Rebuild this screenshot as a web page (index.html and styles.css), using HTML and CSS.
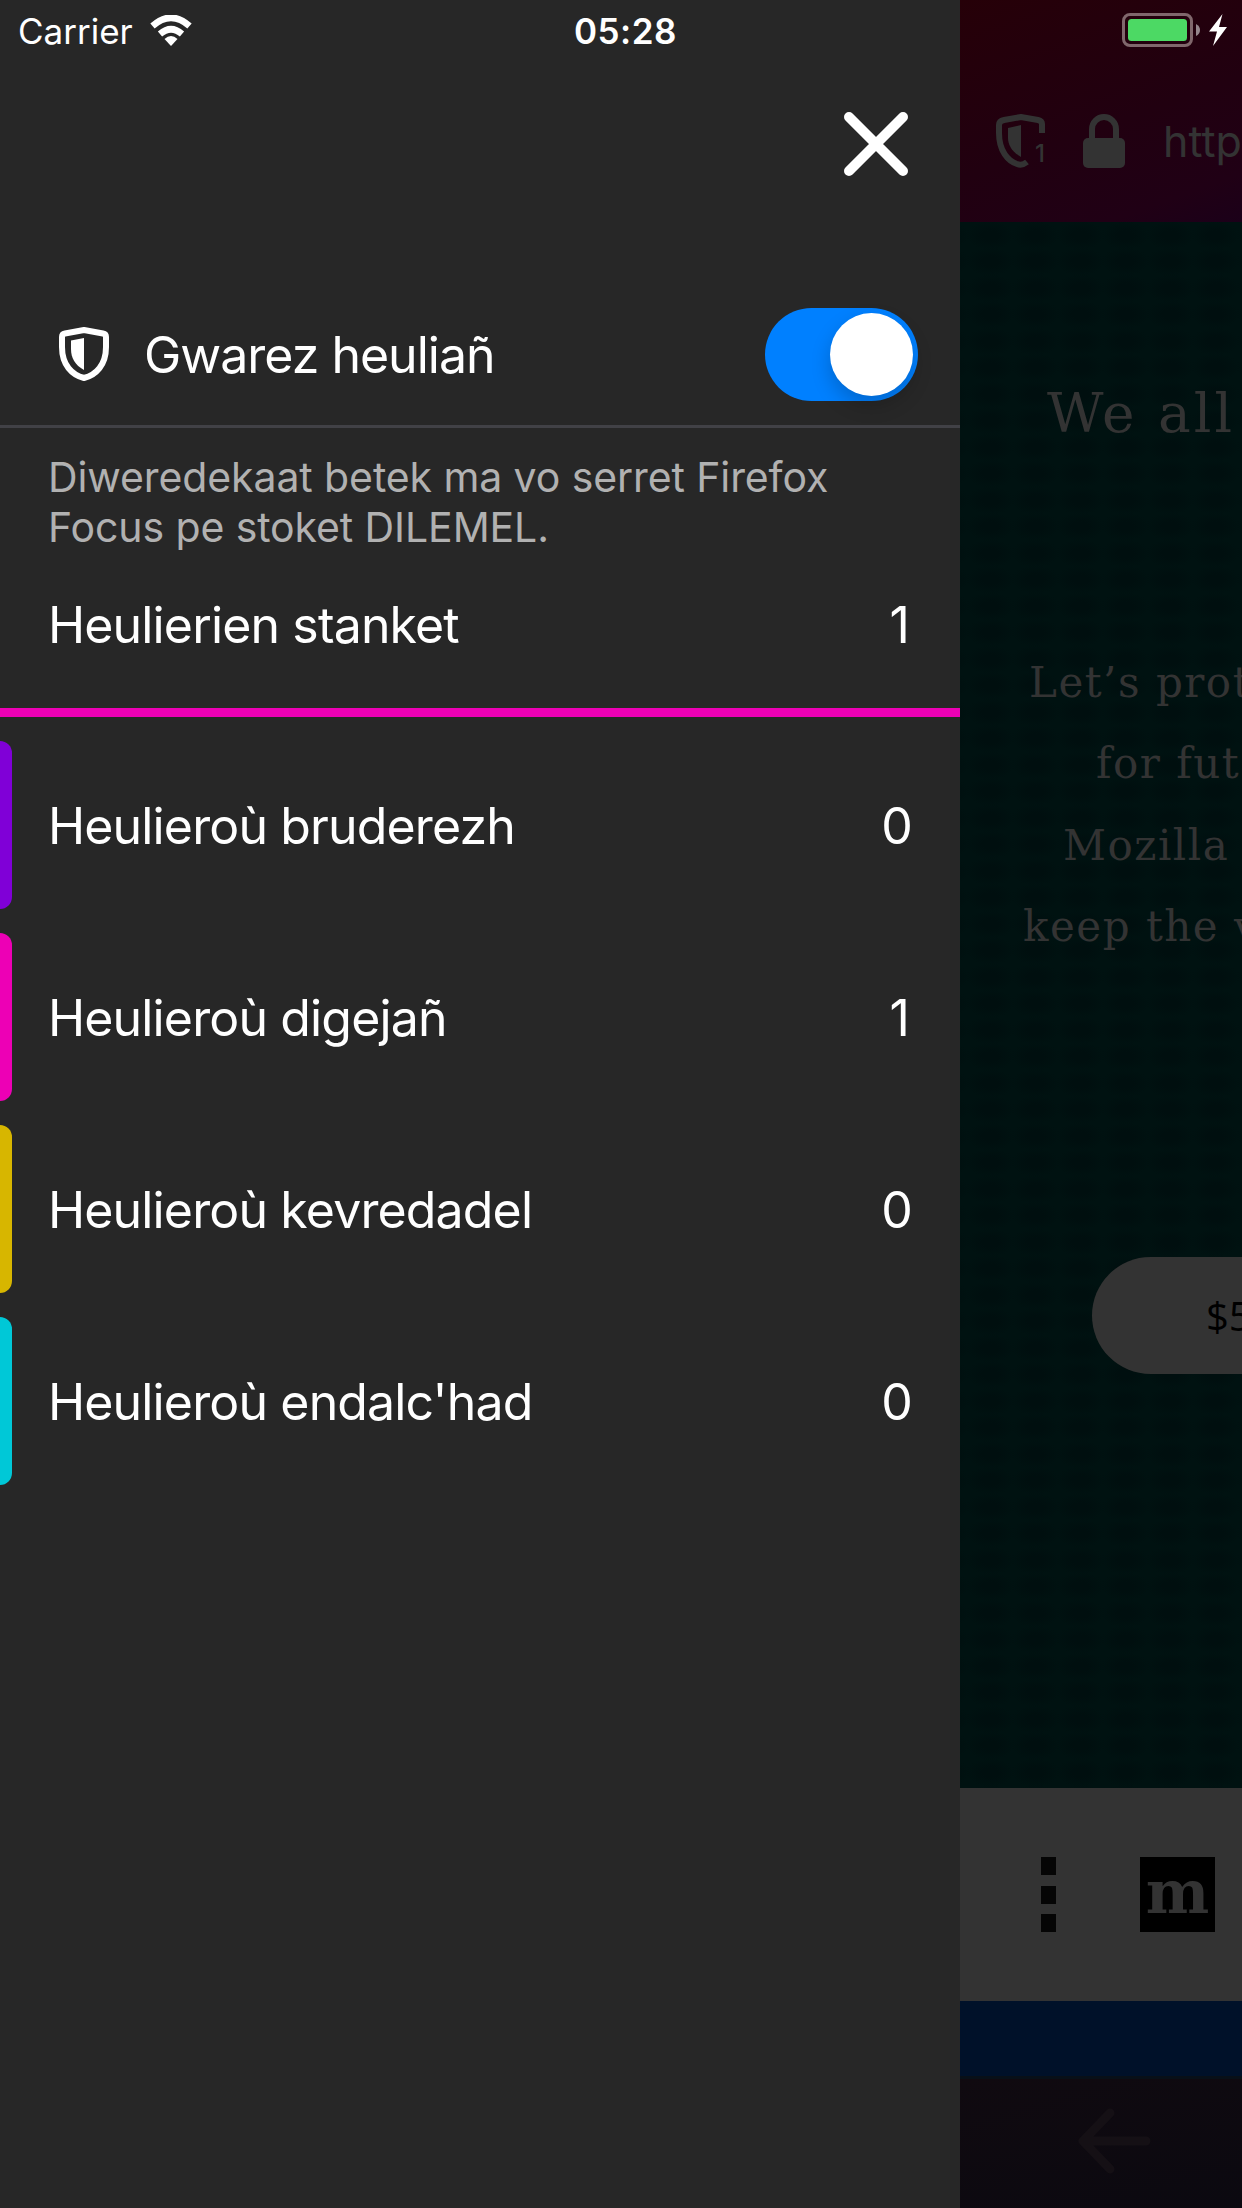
FILE: index.html
```html
<!DOCTYPE html>
<html lang="br">
<head>
<meta charset="utf-8">
<title>Firefox Focus</title>
<link rel="stylesheet" href="styles.css">
</head>
<body>
<div class="screen">
  <aside class="drawer">
    <div class="drawer-head">
      <svg class="close" viewBox="0 0 64 64"><path d="M5 5L59 59M59 5L5 59"/></svg>
    </div>
    <div class="protection">
      <svg class="shield" viewBox="0 0 50 54"><path class="shield-line" d="M25 3L44 6.500Q47 7 47 10V20C47 38 37 48 25 51C13 48 3 38 3 20V10Q3 7 6 6.500Z"/><path class="shield-fill" d="M25 11V43C16 38 12 31 12 22V13.500Z"/></svg>
      <span class="label title">Gwarez heuliañ</span>
      <span class="switch"><span class="knob"></span></span>
    </div>
    <p class="note">Diweredekaat betek ma vo serret Firefox<br>Focus pe stoket DILEMEL.</p>
    <div class="total"><span class="label">Heulierien stanket</span><span class="count one">1</span></div>
    <ul class="trackers">
      <li class="tracker ads"><span class="label">Heulieroù bruderezh</span><span class="count">0</span></li>
      <li class="tracker analytics"><span class="label">Heulieroù digejañ</span><span class="count one">1</span></li>
      <li class="tracker social"><span class="label">Heulieroù kevredadel</span><span class="count">0</span></li>
      <li class="tracker content"><span class="label">Heulieroù endalc'had</span><span class="count">0</span></li>
    </ul>
  </aside>
  <main class="browser">
    <header class="urlbar">
      <svg class="tracking" viewBox="0 0 52 54"><path class="tracking-line" d="M46 19V10Q46 7 42 6L25 3L8 6Q3 7 3 11V19C3 37 12 47 21 50Q26 52 31 48"/><path class="tracking-fill" d="M25 11V43C16 38 12 31 12 24V14Z"/><text x="39" y="48">1</text></svg>
      <svg class="lock" viewBox="0 0 42 54"><rect y="24" width="42" height="30" rx="5"/><path d="M9 27V15A12 12 0 0 1 33 15V27"/></svg>
      <span class="url">http</span>
    </header>
    <section class="page">
      <h1 class="headline">We all</h1>
      <div class="story">
        <p class="line l1">Let’s prot</p>
        <p class="line l2">for fut</p>
        <p class="line l3">Mozilla</p>
        <p class="line l4">keep the v</p>
      </div>
      <div class="donate"><span>$5</span></div>
    </section>
    <nav class="site-nav">
      <span class="dots"><i></i><i></i><i></i></span>
      <span class="moz">m</span>
    </nav>
    <div class="site-strip"></div>
    <footer class="toolbar"><svg class="back" viewBox="0 0 74 66"><path d="M32 5L5 33L32 61M6 33H68"/></svg></footer>
  </main>
  <div class="status">
    <span class="carrier">Carrier</span>
    <svg class="wifi" viewBox="0 0 42 31"><path d="M2.500 11Q21 -5.500 39.500 11M10 19Q21 9.500 32 19"/><path class="wifi-dot" d="M21 31L14.500 24Q21 18 27.500 24Z"/></svg>
    <span class="time">05:28</span>
    <svg class="battery" viewBox="0 0 78 34"><rect class="battery-case" x="1.500" y="1.500" width="68" height="31" rx="6.500"/><rect class="battery-level" x="6" y="6" width="59" height="22" rx="3.500"/><path class="battery-cap" d="M74 11Q78 13 78 17T74 23Z"/></svg>
    <svg class="bolt" viewBox="0 0 18 32"><path d="M13.500 0L0 17.500H8L4 32L18 13H10Z"/></svg>
  </div>
</div>
</body>
</html>
```
FILE: styles.css
```css
* { box-sizing: border-box; margin: 0; padding: 0; }
body { width: 1242px; height: 2208px; overflow: hidden; font-family: Inter, "Liberation Sans", sans-serif; color: #fff; }
svg { display: block; flex: none; }
.screen { position: relative; display: flex; width: 1242px; height: 2208px; overflow: hidden; }
.drawer { width: 960px; flex: none; background: #272727; }

.drawer-head { height: 281px; padding: 112px 52px 0 0; display: flex; justify-content: flex-end; }
.close { width: 64px; height: 64px; fill: none; stroke: #fff; stroke-width: 10; stroke-linecap: round; }
.protection { height: 147px; border-bottom: 3px solid #414146; display: flex; align-items: center; padding: 2px 42px 0 59px; }
.shield { width: 50px; height: 54px; }
.shield-line { fill: none; stroke: #fff; stroke-width: 6; stroke-linejoin: round; }
.shield-fill { fill: #fff; }
.label, .count { font-size: 50px; line-height: 60px; white-space: nowrap; letter-spacing: -0.85px; }
.one { margin-right: 3px; }
.title { margin-left: 35px; letter-spacing: -1px; padding-top: 2px; }
.switch { margin-left: auto; width: 153px; height: 93px; border-radius: 47px; background: #0080ff; padding: 5px; display: flex; justify-content: flex-end; }
.knob { width: 83px; height: 83px; border-radius: 50%; background: #fff; box-shadow: 0 9px 20px rgba(0,0,0,.2); }

.note { height: 152px; padding: 24px 48px 0; font-size: 41px; line-height: 50px; letter-spacing: -0.1px; color: #b1b1b1; white-space: nowrap; }
.total { height: 137px; padding: 15px 48px 0; display: flex; justify-content: space-between; border-bottom: 9px solid #ed00b5; }
.trackers { list-style: none; padding-top: 24px; display: grid; gap: 24px; }
.tracker { height: 168px; padding-right: 48px; display: flex; align-items: center; }
.tracker::before { content: ""; width: 12px; height: 168px; margin-right: 36px; border-radius: 0 12px 12px 0; background: var(--mark); }
.tracker .label { flex: 1; padding-top: 2px; }
.tracker .count { padding-top: 2px; }
.ads { --mark: #8000d7; }
.analytics { --mark: #ed00b5; }
.social { --mark: #d7b600; }
.content { --mark: #00c8d7; }

.browser { flex: 1; min-width: 0; overflow: hidden; display: flex; flex-direction: column; }
.urlbar { height: 222px; padding-top: 60px; padding-left: 36px; display: flex; align-items: center; background: linear-gradient(160deg, #260008 0%, #210010 55%, #200015 85%, #1b0019 100%); color: #333; }
.tracking { width: 52px; height: 54px; }
.tracking-line { fill: none; stroke: #333; stroke-width: 6; }
.tracking-fill { fill: #333; }
.tracking text { font-size: 24px; font-weight: 500; fill: #333; }
.lock { width: 42px; height: 54px; margin-left: 35px; fill: #333; }
.lock path { fill: none; stroke: #333; stroke-width: 6; }
.url { margin-left: 38px; font-size: 43px; }
.page { height: 1566px; padding-top: 156px; overflow: hidden; background: radial-gradient(ellipse, #000f0f 25%, #001211 75%) 8px 0 / 45px 26.5px; color: #333; font-family: "DejaVu Serif", serif; }
.headline { font-size: 55px; line-height: 70px; font-weight: 400; margin-left: 87px; white-space: nowrap; letter-spacing: 3px; }
.story { margin-top: 202px; }
.line { font-size: 42px; line-height: 66px; height: 66px; white-space: nowrap; margin-bottom: 15.300px; letter-spacing: 1.500px; }
.l1 { margin-left: 69px; }
.l2 { margin-left: 136px; }
.l3 { margin-left: 103px; }
.l4 { margin-left: 63px; }
.donate { margin: 297px 0 0 132px; width: 300px; height: 117px; border-radius: 59px; background: #333; color: #000; padding-left: 114px; display: flex; align-items: center; font: 40px "Open Sans", sans-serif; }
.site-nav { height: 213px; background: #333; display: flex; align-items: center; padding-left: 81px; }
.dots { width: 15px; height: 75px; display: flex; flex-direction: column; justify-content: space-between; }
.dots i { height: 18px; background: #050505; }
.moz { margin-left: 84px; width: 75px; height: 75px; background: #000; color: #333; display: flex; justify-content: center; font: bold 60px/70px "DejaVu Serif", serif; }
.site-strip { height: 75px; background: #001129; }
.toolbar { flex: 1; border-top: 3px solid #081018; background: linear-gradient(165deg, #100a10, #0b0910); padding: 29px 0 0 118px; }
.back { width: 74px; height: 66px; fill: none; stroke: #151015; stroke-width: 9; stroke-linecap: round; stroke-linejoin: round; }

.status { position: absolute; inset: 0 0 auto; height: 60px; display: flex; align-items: center; padding: 0 15px 0 18px; }
.carrier { width: 132px; padding-top: 2px; font-size: 35px; white-space: nowrap; }
.wifi { width: 42px; height: 31px; fill: none; stroke: #fff; stroke-width: 6.500; }
.wifi .wifi-dot { fill: #fff; stroke: none; }
.time { margin-left: 382px; width: 105px; padding-top: 2px; font-size: 35px; font-weight: 600; letter-spacing: 0.5px; white-space: nowrap; }
.battery { margin-left: auto; width: 78px; height: 34px; }
.battery-case { fill: none; stroke: #80676c; stroke-width: 3; }
.battery-level { fill: #4cd964; }
.battery-cap { fill: #95868c; }
.bolt { width: 18px; height: 32px; margin-left: 9px; fill: #fff; }
```
